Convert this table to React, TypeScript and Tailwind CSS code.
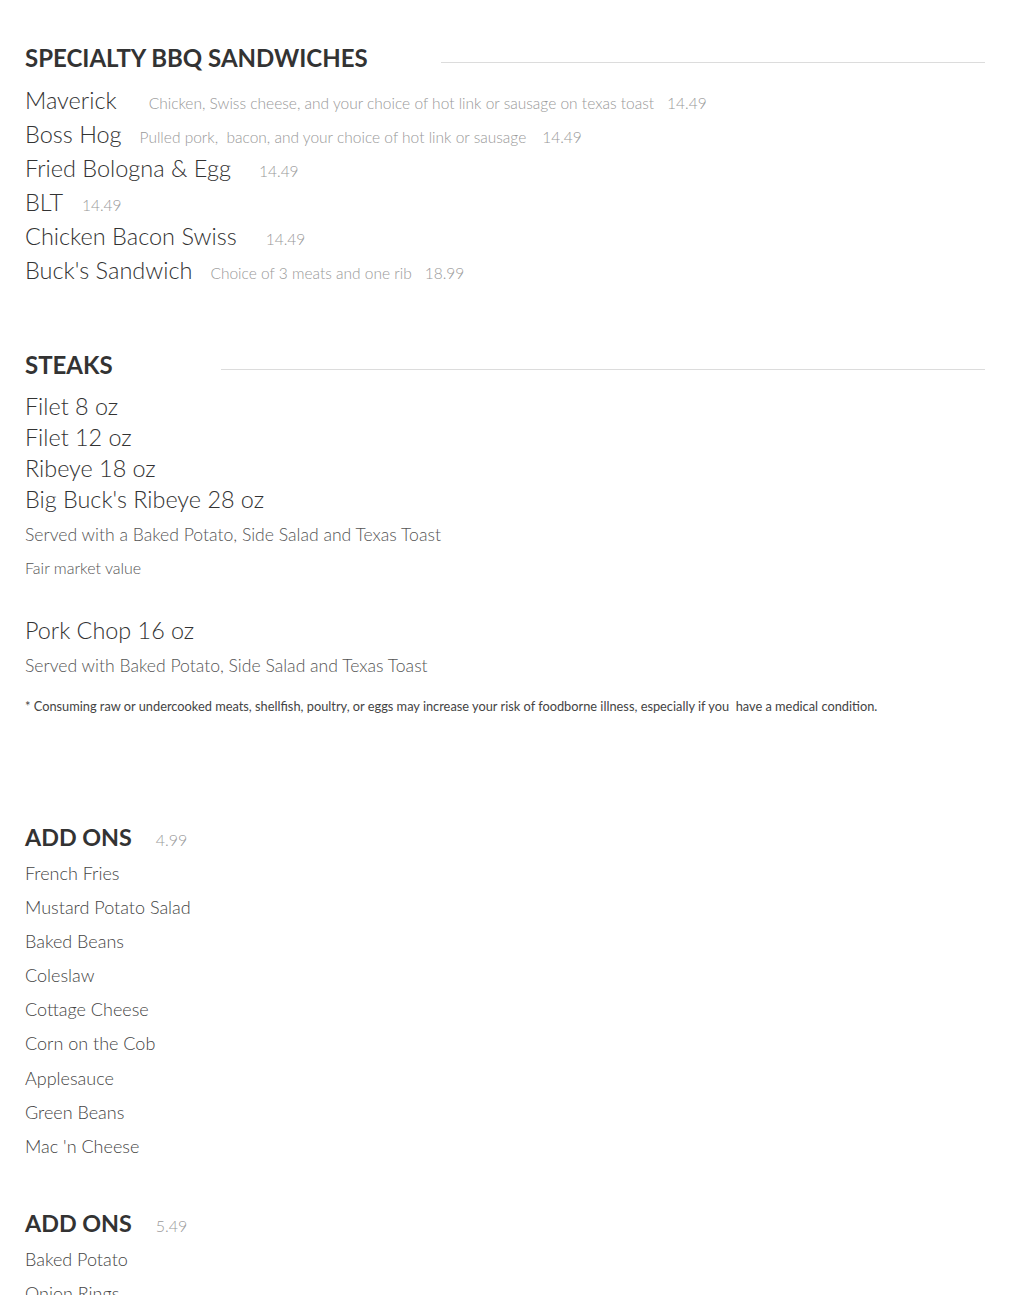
const sandwiches = [
  { name: "Maverick", desc: "Chicken, Swiss cheese, and your choice of hot link or sausage on texas toast", price: "14.49", gap: "ml-[32px]", pgap: "ml-[13px]" },
  { name: "Boss Hog", desc: "Pulled pork,\u00a0 bacon, and your choice of hot link or sausage", price: "14.49", gap: "ml-[18px]", pgap: "ml-[16px]" },
  { name: "Fried Bologna & Egg", desc: "", price: "14.49", gap: "ml-[28px]", pgap: "" },
  { name: "BLT", desc: "", price: "14.49", gap: "ml-[19px]", pgap: "" },
  { name: "Chicken Bacon Swiss", desc: "", price: "14.49", gap: "ml-[29px]", pgap: "" },
  { name: "Buck's Sandwich", desc: "Choice of 3 meats and one rib", price: "18.99", gap: "ml-[18px]", pgap: "ml-[13px]" },
];

const steaks = ["Filet 8 oz", "Filet 12 oz", "Ribeye 18 oz", "Big Buck's Ribeye 28 oz"];

const sides1 = [
  "French Fries",
  "Mustard Potato Salad",
  "Baked Beans",
  "Coleslaw",
  "Cottage Cheese",
  "Corn on the Cob",
  "Applesauce",
  "Green Beans",
  "Mac 'n Cheese",
];

const sides2 = ["Baked Potato", "Onion Rings"];

const SectionTitle = ({ title, lineGap }: { title: string; lineGap: string }) => (
  <div className="flex items-center h-[28px]">
    <h2 className="text-[24px] leading-[28px] font-bold text-[#333] whitespace-nowrap">{title}</h2>
    <div className={`flex-1 h-px bg-[#dcdcdc] mt-[8px] ${lineGap}`} />
  </div>
);

const AddOns = ({ price, items }: { price: string; items: string[] }) => (
  <div>
    <div className="flex items-baseline h-[28px]">
      <h2 className="text-[23.3px] leading-[28px] font-bold text-[#333]">ADD ONS</h2>
      <span className="ml-[24px] text-[16px] font-light text-[#999]">{price}</span>
    </div>
    <ul className="mt-[5px]">
      {items.map((s) => (
        <li key={s} className="text-[18px] leading-[34.1px] font-light text-[#444]">
          {s}
        </li>
      ))}
    </ul>
  </div>
);

export default function App() {
  return (
    <div className="min-h-screen bg-white font-['Lato','Liberation_Sans',sans-serif] px-[25px] pt-[44px] pb-10 overflow-hidden">
      {/* Sandwiches */}
      <SectionTitle title="SPECIALTY BBQ SANDWICHES" lineGap="ml-[73px]" />
      <div className="mt-[11px]">
        {sandwiches.map((s) => (
          <div key={s.name} className="flex items-baseline h-[34px] leading-[34px] whitespace-nowrap">
            <span className="text-[23.5px] font-light text-[#333]">{s.name}</span>
            {s.desc && <span className={`text-[15.5px] font-light text-[#999] ${s.gap}`}>{s.desc}</span>}
            <span className={`text-[15.5px] font-light text-[#999] ${s.desc ? s.pgap : s.gap}`}>{s.price}</span>
          </div>
        ))}
      </div>

      {/* Steaks */}
      <div className="mt-[64px]">
        <SectionTitle title="STEAKS" lineGap="ml-[108px]" />
      </div>
      <div className="mt-[12px]">
        {steaks.map((s) => (
          <div key={s} className="text-[23.4px] leading-[31px] font-light text-[#333]">
            {s}
          </div>
        ))}
      </div>
      <p className="mt-[6px] text-[17.6px] leading-[28px] font-light text-[#555]">
        Served with a Baked Potato, Side Salad and Texas Toast
      </p>
      <p className="mt-[7px] text-[16px] leading-[24px] font-light text-[#555]">Fair market value</p>

      <div className="mt-[35px] text-[23.4px] leading-[31px] font-light text-[#333]">Pork Chop 16 oz</div>
      <p className="mt-[6px] text-[17.6px] leading-[28px] font-light text-[#555]">
        Served with Baked Potato, Side Salad and Texas Toast
      </p>
      <p className="mt-[17px] text-[12.8px] leading-[18px] text-[#444]">
        * Consuming raw or undercooked meats, shellfish, poultry, or eggs may increase your risk of foodborne illness, especially if you&nbsp; have a medical condition.
      </p>

      {/* Add ons */}
      <div className="mt-[108px]">
        <AddOns price="4.99" items={sides1} />
      </div>
      <div className="mt-[46px]">
        <AddOns price="5.49" items={sides2} />
      </div>
    </div>
  );
}
